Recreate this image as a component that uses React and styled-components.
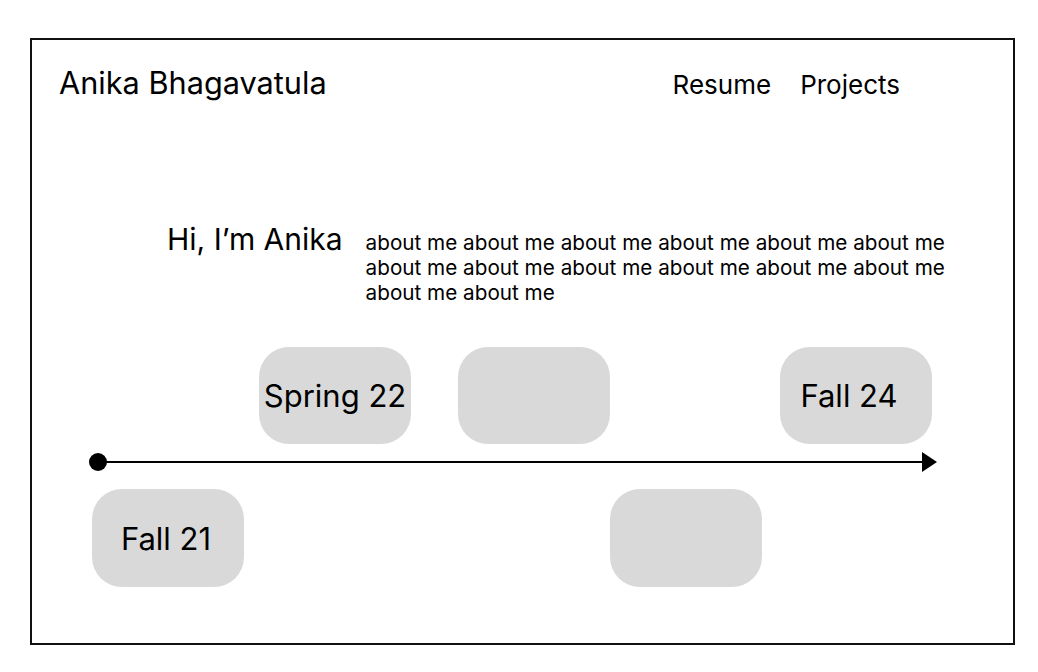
import React from 'react';
import styled, { createGlobalStyle } from 'styled-components';

const GlobalStyle = createGlobalStyle`
  html, body {
    margin: 0;
    padding: 0;
    background: #ffffff;
  }
  body {
    font-family: Inter, "Noto Sans", "Liberation Sans", sans-serif;
    color: #000000;
  }
`;

const Frame = styled.div`
  box-sizing: border-box;
  width: 985px;
  height: 607px;
  margin: 38px 0 0 30px;
  border: 2px solid #111111;
  display: flex;
  flex-direction: column;
`;

const Header = styled.header`
  display: flex;
  justify-content: space-between;
  align-items: baseline;
  padding: 26px 113px 0 27px;
`;

const Name = styled.h1`
  margin: 0;
  font-size: 30.7px;
  font-weight: 400;
  line-height: 34px;
`;

const Nav = styled.nav`
  display: flex;
  gap: 29px;
`;

const NavLink = styled.a`
  font-size: 26px;
  line-height: 34px;
  color: #000000;
  text-decoration: none;
  cursor: pointer;
`;

const Hero = styled.section`
  display: flex;
  align-items: baseline;
  gap: 23px;
  margin-top: 121px;
  padding-left: 135px;
`;

const Greeting = styled.h2`
  margin: 0;
  font-size: 30px;
  font-weight: 400;
  line-height: 32px;
  white-space: nowrap;
`;

const About = styled.p`
  margin: 0;
  width: 595px;
  font-size: 20.7px;
  line-height: 25px;
`;

const Timeline = styled.div`
  display: grid;
  grid-template-columns: 152px 15px 152px 47px 152px 152px 18px 152px;
  grid-template-rows: 97px 45px 98px;
  margin: 42px 0 0 60px;
`;

const Card = styled.div`
  grid-column: ${p => p.$col};
  grid-row: ${p => p.$row};
  display: flex;
  align-items: center;
  justify-content: center;
  padding-right: ${p => p.$shift || 0}px;
  background: #d9d9d9;
  border-radius: 30px;
  font-size: 31px;
`;

const Axis = styled.div`
  grid-column: 1 / -1;
  grid-row: 2;
  display: flex;
  align-items: center;
  height: 2px;
  margin: 17px -5px 0 -3px;
`;

const Dot = styled.span`
  flex: none;
  width: 18px;
  height: 18px;
  border-radius: 50%;
  background: #000000;
`;

const Line = styled.span`
  flex: 1;
  height: 2.5px;
  margin-left: -9px;
  background: #000000;
`;

const ArrowHead = styled.span`
  flex: none;
  width: 0;
  height: 0;
  border-top: 10px solid transparent;
  border-bottom: 10px solid transparent;
  border-left: 15px solid #000000;
`;

const about = Array(14).fill('about me').join(' ');

const cards = [
  { label: 'Spring 22', col: 3, row: 1 },
  { label: '', col: 5, row: 1 },
  { label: 'Fall 24', col: 8, row: 1, shift: 14 },
  { label: 'Fall 21', col: 1, row: 3, shift: 4 },
  { label: '', col: 6, row: 3 },
];

export default function App() {
  return (
    <>
      <GlobalStyle />
      <Frame>
        <Header>
          <Name>Anika Bhagavatula</Name>
          <Nav>
            <NavLink>Resume</NavLink>
            <NavLink>Projects</NavLink>
          </Nav>
        </Header>

        <Hero>
          <Greeting>Hi, I’m Anika</Greeting>
          <About>{about}</About>
        </Hero>

        <Timeline>
          {cards.map((c, i) => (
            <Card key={i} $col={c.col} $row={c.row} $shift={c.shift}>
              {c.label}
            </Card>
          ))}
          <Axis>
            <Dot />
            <Line />
            <ArrowHead />
          </Axis>
        </Timeline>
      </Frame>
    </>
  );
}
